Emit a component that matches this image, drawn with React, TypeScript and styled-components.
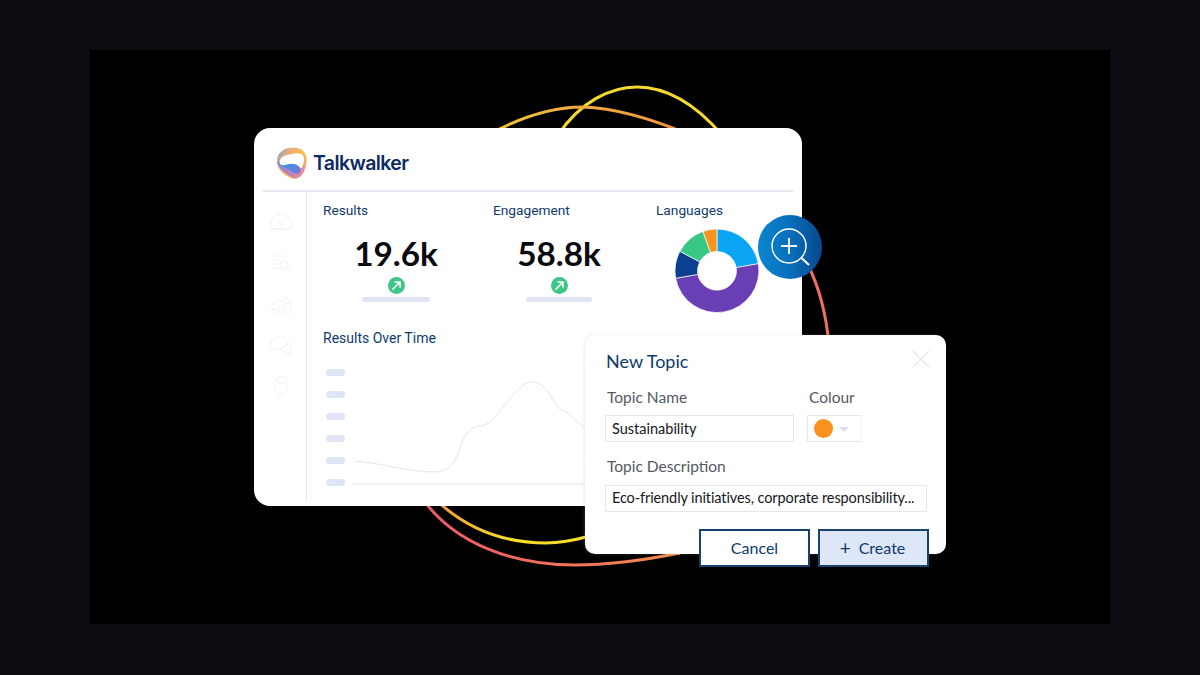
import { createGlobalStyle, styled } from 'styled-components'

const NAVY = '#0f3a6b'
const PILL = '#dfe5f5'
const HAIR = '#e3e7ef'

const GlobalStyle = createGlobalStyle`
  html, body {
    margin: 0;
    padding: 0;
    background: #0c0d12;
  }
  * {
    box-sizing: border-box;
  }
`

const Page = styled.div`
  width: 1200px;
  height: 675px;
  padding: 50px 90px 51px;
  overflow: hidden;
  font-family: 'Noto Sans', sans-serif;
`

const Stage = styled.div`
  position: relative;
  height: 574px;
  padding: 78px 0 0 164px;
  background: #000;
`

const Arcs = styled.svg`
  position: absolute;
  inset: 0;
`

const Card = styled.section`
  position: relative;
  width: 548px;
  height: 378px;
  padding: 0 9px 4px;
  border-radius: 16px;
  background: #fff;
`

const Header = styled.header`
  display: flex;
  align-items: center;
  gap: 5px;
  height: 64px;
  padding: 8px 0 0 13px;
  border-bottom: 2px solid ${HAIR};
`

const Brand = styled.span`
  font-family: 'Inter', sans-serif;
  font-size: 19.5px;
  font-weight: 600;
  letter-spacing: -0.6px;
  color: #0c2a63;
`

const Sidebar = styled.nav`
  display: flex;
  flex-direction: column;
  align-items: center;
  gap: 20px;
  width: 44px;
  padding: 20px 8px 0 0;
  border-right: 1px solid ${HAIR};
`

const Body = styled.div`
  display: flex;
  height: 310px;
`

const Content = styled.main`
  flex: 1;
  padding: 9px 0 0 16px;
`

const Metrics = styled.div`
  display: grid;
  grid-template-columns: 170px 163px 1fr;
  height: 110px;
`

const Label = styled.h3`
  margin: 0;
  font-family: 'Roboto', sans-serif;
  font-size: 13.7px;
  font-weight: 400;
  line-height: 18px;
  color: ${NAVY};
`

const Figure = styled.div<{ $width: number }>`
  display: flex;
  flex-direction: column;
  align-items: center;
  width: ${(p) => p.$width}px;
  margin-top: 14px;
`

const Value = styled.div`
  font-family: 'Lato', sans-serif;
  font-size: 33.3px;
  font-weight: 700;
  line-height: 40px;
  color: #0a0a0f;
`

const Trend = styled.span`
  display: flex;
  align-items: center;
  justify-content: center;
  width: 17px;
  height: 17px;
  margin-top: 4px;
  border-radius: 50%;
  background: #3fc588;
`

const Bar = styled.span<{ $width: number }>`
  width: ${(p) => p.$width}px;
  height: 5px;
  margin-top: 3px;
  border-radius: 3px;
  background: ${PILL};
`

const Donut = styled.svg`
  display: block;
  margin: 10px 0 0 19px;
`

const ChartTitle = styled(Label)`
  margin-top: 18px;
  font-size: 14px;
`

const Chart = styled.div`
  display: flex;
  gap: 7px;
  margin: 22px 0 0 3px;
`

const Axis = styled.div`
  display: flex;
  flex-direction: column;
  gap: 15px;
`

const Tick = styled.span`
  width: 19px;
  height: 7px;
  border-radius: 4px;
  background: ${PILL};
`

const Lens = styled.div`
  position: absolute;
  left: 504px;
  top: 87px;
  width: 64px;
  height: 64px;
  border-radius: 50%;
  background: linear-gradient(90deg, #0a86cf 0%, #0a6fbb 50%, #07488f 100%);
`

const Dialog = styled.div`
  position: absolute;
  left: 331px;
  top: 207px;
  width: 361px;
  height: 219px;
  padding: 14px 18px 0 20px;
  border-radius: 10px;
  background: #fff;
  box-shadow: -1px 0 3px rgba(170, 180, 200, 0.25);
  font-family: 'Lato', sans-serif;
`

const Close = styled.svg`
  position: absolute;
  right: 16px;
  top: 15px;
`

const DialogTitle = styled.h2`
  margin: 0 0 14px 1px;
  font-size: 18px;
  font-weight: 400;
  line-height: 24px;
  color: ${NAVY};
`

const FieldRow = styled.div`
  display: grid;
  grid-template-columns: 189px 55px;
  gap: 13px;
`

const FieldLabel = styled.div<{ $gap: number }>`
  padding-left: 2px;
  margin-bottom: ${(p) => p.$gap}px;
  font-size: 15.5px;
  line-height: 20px;
  color: #55585e;
`

const Input = styled.div`
  display: flex;
  align-items: center;
  height: 27px;
  padding: 0 6px 1px;
  border: 1px solid ${HAIR};
  font-size: 14.5px;
  color: #15171c;
  white-space: nowrap;
  overflow: hidden;
`

const DescInput = styled(Input)`
  padding-bottom: 3px;
  letter-spacing: -0.1px;
`

const ColourInput = styled(Input)`
  border-right-color: #f3f5f9;
  padding-bottom: 0;
`

const Swatch = styled.span`
  width: 19px;
  height: 19px;
  border-radius: 50%;
  background: #f7931e;
`

const Caret = styled.span`
  width: 0;
  height: 0;
  margin: 2px 0 0 6px;
  border: 5px solid transparent;
  border-top: 5px solid #d8e0f2;
  border-bottom: 0;
`

const DescBlock = styled.div`
  width: 322px;
  margin-top: 14px;
`

const Actions = styled.div`
  position: absolute;
  left: 114px;
  top: 194px;
  display: flex;
  gap: 8px;
`

const Button = styled.button<{ $primary?: boolean }>`
  display: flex;
  align-items: center;
  justify-content: center;
  width: 111px;
  height: 38px;
  padding: 0 ${(p) => (p.$primary ? '2px' : '0')} 2px 0;
  border: 2px solid #17426f;
  background: ${(p) => (p.$primary ? '#dde7f8' : '#fff')};
  font-family: 'Lato', sans-serif;
  font-size: 16px;
  color: ${NAVY};
`

const Plus = styled.span`
  margin-right: 8px;
  font-size: 19px;
  line-height: 1;
`

const polar = (cx: number, cy: number, r: number, deg: number) => {
  const a = ((deg - 90) * Math.PI) / 180
  return `${(cx + r * Math.cos(a)).toFixed(2)} ${(cy + r * Math.sin(a)).toFixed(2)}`
}

const slice = (from: number, to: number) => {
  const large = to - from > 180 ? 1 : 0
  return `M${polar(42, 42, 42, from)} A42 42 0 ${large} 1 ${polar(42, 42, 42, to)} L${polar(42, 42, 19.5, to)} A19.5 19.5 0 ${large} 0 ${polar(42, 42, 19.5, from)} Z`
}

const SLICES = [
  { from: 0, to: 80, color: '#0aa6f5' },
  { from: 80, to: 260, color: '#6a3eb5' },
  { from: 260, to: 298, color: '#0b3f8f' },
  { from: 298, to: 340.5, color: '#38c785' },
  { from: 340.5, to: 360, color: '#f7941f' },
]

const ICON = { fill: 'none', stroke: '#f0f2f5', strokeWidth: 1 }

const Logo = () => (
  <svg width="32" height="33" viewBox="0 0 32 33">
    <defs>
      <linearGradient id="blob" x1="0" y1="0" x2="1" y2="0.6">
        <stop offset="0" stopColor="#5fb4e0" />
        <stop offset="0.35" stopColor="#f3a878" />
        <stop offset="0.7" stopColor="#f8c04e" />
        <stop offset="1" stopColor="#f3a06a" />
      </linearGradient>
      <linearGradient id="blob-low" x1="0" y1="0" x2="1" y2="0">
        <stop offset="0" stopColor="#8a7fd6" />
        <stop offset="1" stopColor="#f08aa4" />
      </linearGradient>
      <linearGradient id="crescent" x1="0" y1="0" x2="1" y2="0.4">
        <stop offset="0" stopColor="#27a3ea" />
        <stop offset="1" stopColor="#6f78d8" />
      </linearGradient>
    </defs>
    <path
      d="M1 14C1 7 6 2 13 1c7-1 13 0 16 5 2 4 2 8 1 12-1 5-3 11-8 13-4 2-8 0-11-2-3-2-5-3-7-6-2-3-3-6-3-9z"
      fill="url(#blob)"
    />
    <path d="M1 15c1 5 6 9 11 13 4 3 8 4 11 2 3-2 5-6 6-11-8 5-20-1-28-4z" fill="url(#blob-low)" />
    <path d="M3 15c1 4 5 5 9 7 4 3 8 6 11 4 2-2 3-5 3-8-6-2-16-5-23-3z" fill="url(#crescent)" />
    <path
      d="M4 17c-1-5 2-8 7-9 4-1 10-2 14-1 2 1 3 3 3 5 0 4-1 6-3 10-2-3-4-5-8-5-5-1-9 3-13 0z"
      fill="#fff"
    />
  </svg>
)

const Arrow = () => (
  <svg width="11" height="11" viewBox="0 0 11 11" fill="none" stroke="#fff" strokeWidth="1.6">
    <path d="M1.5 9.5L9 2M3.5 2H9v5.5" />
  </svg>
)

const App = () => (
  <>
    <GlobalStyle />
    <Page>
      <Stage>
        <Arcs width="1020" height="574" viewBox="90 50 1020 574" fill="none">
          <defs>
            <linearGradient id="low-red" x1="0" y1="0" x2="1" y2="0">
              <stop offset="0" stopColor="#e9586a" />
              <stop offset="1" stopColor="#f58b4c" />
            </linearGradient>
            <linearGradient id="low-yellow" x1="0" y1="0" x2="1" y2="0">
              <stop offset="0" stopColor="#ee9a3a" />
              <stop offset="0.45" stopColor="#f8dc2c" />
              <stop offset="1" stopColor="#f8dc2c" />
            </linearGradient>
            <linearGradient id="top-orange" x1="0" y1="0" x2="1" y2="0">
              <stop offset="0" stopColor="#f2c338" />
              <stop offset="1" stopColor="#ef8f3e" />
            </linearGradient>
          </defs>
          <path d="M558 135C580 102 610 87 637 87C668 87 697 106 722 135" stroke="#f6d92e" strokeWidth="3" />
          <path d="M488 135C528 113 560 107 583 107C615 108 650 118 690 135" stroke="url(#top-orange)" strokeWidth="3" />
          <path d="M808 265C818 285 826 312 829 345" stroke="#ef7062" strokeWidth="3" />
          <path d="M436 500C470 532 510 543 546 543C562 543 575 540 590 536" stroke="url(#low-yellow)" strokeWidth="3" />
          <path d="M422 498C455 545 515 565 575 565C610 565 645 560 680 553" stroke="url(#low-red)" strokeWidth="3" />
        </Arcs>
        <Card>
          <Header>
            <Logo />
            <Brand>Talkwalker</Brand>
          </Header>
          <Body>
            <Sidebar>
              <svg width="22" height="21" viewBox="0 0 22 21" {...ICON}>
                <path d="M1 17C-1 8 5 2 11 2s12 6 10 15zM1 17h20M7 7l4 6M11 13h3" />
              </svg>
              <svg width="22" height="21" viewBox="0 0 22 21" {...ICON}>
                <path d="M2 3h15M2 7h7M2 11h7M2 15h9M16 16l4 3" />
                <circle cx="14" cy="12" r="4" />
              </svg>
              <svg width="22" height="21" viewBox="0 0 22 21" {...ICON}>
                <path d="M2 20v-5h4v5M9 20v-8h4v8M16 20V9h4v11M2 11l7-5 4 2 6-7" />
              </svg>
              <svg width="22" height="21" viewBox="0 0 22 21" {...ICON}>
                <path d="M9 2c5 0 8 3 8 6s-3 6-8 6H7l-3 2v-3C2 12 1 10 1 8c0-3 3-6 8-6zM17 7c3 1 4 3 4 5s-1 3-2 4v3l-3-2c-3 0-5-1-6-3" />
              </svg>
              <svg width="18" height="21" viewBox="0 0 18 21" {...ICON}>
                <path d="M9 20C5 16 2 13 2 8a7 7 0 0 1 14 0c0 5-3 8-7 12zM5 8c2-2 6-2 8 0M7 11h4" />
              </svg>
            </Sidebar>
            <Content>
              <Metrics>
                <div>
                  <Label>Results</Label>
                  <Figure $width={146}>
                    <Value>19.6k</Value>
                    <Trend>
                      <Arrow />
                    </Trend>
                    <Bar $width={68} />
                  </Figure>
                </div>
                <div>
                  <Label>Engagement</Label>
                  <Figure $width={132}>
                    <Value>58.8k</Value>
                    <Trend>
                      <Arrow />
                    </Trend>
                    <Bar $width={66} />
                  </Figure>
                </div>
                <div>
                  <Label>Languages</Label>
                  <Donut width="84" height="84" viewBox="0 0 84 84">
                    {SLICES.map((s) => (
                      <path key={s.color} d={slice(s.from, s.to)} fill={s.color} stroke="#fff" strokeWidth="0.7" />
                    ))}
                  </Donut>
                </div>
              </Metrics>
              <ChartTitle>Results Over Time</ChartTitle>
              <Chart>
                <Axis>
                  <Tick />
                  <Tick />
                  <Tick />
                  <Tick />
                  <Tick />
                  <Tick />
                </Axis>
                <svg width="240" height="122" viewBox="352 368 240 122" fill="none">
                  <path
                    d="M354 460C375 461 410 471 433 471C450 471 455 462 460 447C465 432 470 426 480 425C488 424 495 418 505 404C515 392 522 381 532 381C548 381 553 405 562 409C570 412 578 422 590 432"
                    stroke="#e3e7ec"
                    strokeWidth="1"
                  />
                  <path d="M352 483H590" stroke="#e8ecf4" strokeWidth="1.5" />
                </svg>
              </Chart>
            </Content>
          </Body>
          <Lens>
            <svg width="64" height="64" viewBox="0 0 64 64" fill="none" stroke="#fff" strokeWidth="1.5">
              <circle cx="31" cy="31" r="17" />
              <path d="M31 23v16M23 31h16" strokeWidth="1.8" />
              <path d="M43.5 43L51 50" strokeWidth="2" />
            </svg>
          </Lens>
          <Dialog>
            <Close width="18" height="18" viewBox="0 0 18 18" stroke="#e6eaf0" strokeWidth="1.5">
              <path d="M1 1l16 16M17 1L1 17" />
            </Close>
            <DialogTitle>New Topic</DialogTitle>
            <FieldRow>
              <div>
                <FieldLabel $gap={8}>Topic Name</FieldLabel>
                <Input>Sustainability</Input>
              </div>
              <div>
                <FieldLabel $gap={8}>Colour</FieldLabel>
                <ColourInput>
                  <Swatch />
                  <Caret />
                </ColourInput>
              </div>
            </FieldRow>
            <DescBlock>
              <FieldLabel $gap={9}>Topic Description</FieldLabel>
              <DescInput>Eco-friendly initiatives, corporate responsibility...</DescInput>
            </DescBlock>
            <Actions>
              <Button>Cancel</Button>
              <Button $primary>
                <Plus>+</Plus>Create
              </Button>
            </Actions>
          </Dialog>
        </Card>
      </Stage>
    </Page>
  </>
)

export default App
